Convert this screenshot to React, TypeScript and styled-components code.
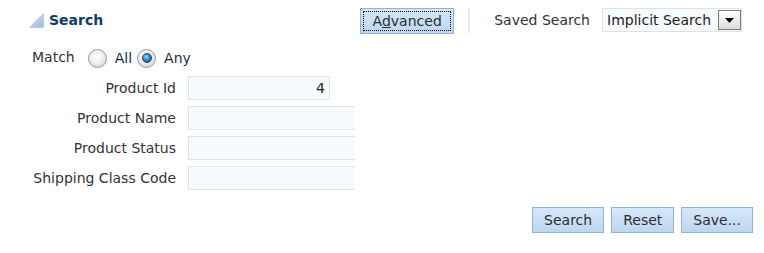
import React from 'react';
import styled, { createGlobalStyle } from 'styled-components';

const GlobalStyle = createGlobalStyle`
  html, body {
    margin: 0;
    padding: 0;
    background: #ffffff;
  }
  body {
    font-family: 'DejaVu Sans', Verdana, sans-serif;
    font-size: 14px;
    color: #333333;
  }
`;

const Panel = styled.div`
  width: 764px;
  height: 253px;
  box-sizing: border-box;
  display: flex;
  flex-direction: column;
  overflow: hidden;
`;

const Header = styled.div`
  height: 40px;
  display: flex;
  align-items: center;
  justify-content: space-between;
  padding: 0 22px 0 29px;
`;

const Title = styled.h2`
  margin: 0;
  display: flex;
  align-items: center;
  gap: 5px;
  font-size: 14px;
  font-weight: bold;
  color: #0b3b66;
`;

const Toolbar = styled.div`
  display: flex;
  align-items: center;
`;

const Button = styled.button<{ $focused?: boolean }>`
  position: relative;
  height: 26px;
  padding: 0 11px;
  border: 1px solid #8fb3d6;
  background: linear-gradient(#d6e8fa, #bcd6f1);
  font-family: 'DejaVu Sans', Verdana, sans-serif;
  font-size: 14px;
  color: #2e2e2e;
  cursor: pointer;

  ${({ $focused }) =>
    $focused &&
    `
    &::after {
      content: '';
      position: absolute;
      inset: 2px;
      border: 1px dotted #000;
    }
  `}
`;

const AdvancedButton = styled(Button)`
  width: 94px;
  margin-top: 1px;
`;

const Separator = styled.span`
  width: 2px;
  height: 25px;
  margin: 0 24px 0 14px;
  background: #e3e9ef;
`;

const SavedLabel = styled.span`
  margin-right: 12px;
  color: #333;
`;

const Select = styled.div`
  width: 140px;
  height: 24px;
  box-sizing: border-box;
  display: flex;
  align-items: center;
  justify-content: space-between;
  padding: 0 0 0 4px;
  border: 1px solid #dbe2e8;
  background: #f8fbfe;
  color: #1c1c1c;
`;

const DropButton = styled.span`
  width: 23px;
  height: 20px;
  box-sizing: border-box;
  display: flex;
  align-items: center;
  justify-content: center;
  border: 1px solid #7d7d7d;
  background: linear-gradient(#ffffff, #dcdcdc);
`;

const MatchRow = styled.div`
  display: flex;
  align-items: center;
  height: 20px;
  margin-top: 8px;
  padding-left: 32px;
`;

const MatchLabel = styled.span`
  margin-right: 13px;
  margin-top: -2px;
`;

const RadioOption = styled.label`
  display: flex;
  align-items: center;
  gap: 8px;
  margin-right: 5px;
  color: #1e2a44;
`;

const RadioDot = styled.span<{ $checked?: boolean }>`
  position: relative;
  width: 19px;
  height: 19px;
  box-sizing: border-box;
  border-radius: 50%;
  border: 1px solid #9a9a9a;
  background: radial-gradient(circle at 45% 40%, #ffffff 0%, #eeeeee 45%, #c8c8c8 100%);

  ${({ $checked }) =>
    $checked &&
    `
    &::after {
      content: '';
      position: absolute;
      left: 3.5px;
      top: 3.5px;
      width: 10px;
      height: 10px;
      box-sizing: border-box;
      border-radius: 50%;
      border: 1px solid #1c3f5e;
      background: radial-gradient(circle at 40% 35%, #9fd8ff 0%, #2b8fd6 45%, #0b4f86 100%);
    }
  `}
`;

const FormGrid = styled.div`
  display: grid;
  grid-template-columns: 144px 167px;
  column-gap: 12px;
  row-gap: 6px;
  margin-top: 8px;
  padding-left: 32px;
`;

const FieldLabel = styled.label`
  display: flex;
  align-items: center;
  justify-content: flex-end;
  height: 24px;
  white-space: nowrap;
`;

const FieldCell = styled.div`
  overflow: hidden;
`;

const Field = styled.div<{ $width: number }>`
  width: ${({ $width }) => $width}px;
  height: 24px;
  box-sizing: border-box;
  display: flex;
  align-items: center;
  justify-content: flex-end;
  padding-right: 4px;
  border: 1px solid #dde3e8;
  background: #f8fbfe;
  color: #222;
`;

const Actions = styled.div`
  display: flex;
  justify-content: flex-end;
  gap: 7px;
  margin-top: 17px;
  padding-right: 11px;
`;

const Disclosure = () => (
  <svg width="15" height="15" viewBox="0 0 15 15">
    <defs>
      <linearGradient id="tri" x1="0" y1="0" x2="1" y2="1">
        <stop offset="0" stopColor="#dbe7f3" />
        <stop offset="1" stopColor="#9ab8d6" />
      </linearGradient>
    </defs>
    <polygon points="14.5,0.5 14.5,14.5 0.5,14.5" fill="url(#tri)" stroke="#b3c9de" strokeWidth="0.8" />
  </svg>
);

const fields = [
  { label: 'Product Id', width: 142, value: '4' },
  { label: 'Product Name', width: 190, value: '' },
  { label: 'Product Status', width: 190, value: '' },
  { label: 'Shipping Class Code', width: 190, value: '' },
];

const App = () => {
  return (
    <>
      <GlobalStyle />
      <Panel>
        <Header>
          <Title>
            <Disclosure />
            Search
          </Title>
          <Toolbar>
            <AdvancedButton $focused>
              A<u>d</u>vanced
            </AdvancedButton>
            <Separator />
            <SavedLabel>Saved Search</SavedLabel>
            <Select>
              Implicit Search
              <DropButton>
                <svg width="9" height="5" viewBox="0 0 9 5">
                  <polygon points="0,0 9,0 4.5,5" fill="#000" />
                </svg>
              </DropButton>
            </Select>
          </Toolbar>
        </Header>

        <MatchRow>
          <MatchLabel>Match</MatchLabel>
          <RadioOption>
            <RadioDot />
            All
          </RadioOption>
          <RadioOption>
            <RadioDot $checked />
            Any
          </RadioOption>
        </MatchRow>

        <FormGrid>
          {fields.map((f) => (
            <React.Fragment key={f.label}>
              <FieldLabel>{f.label}</FieldLabel>
              <FieldCell>
                <Field $width={f.width}>{f.value}</Field>
              </FieldCell>
            </React.Fragment>
          ))}
        </FormGrid>

        <Actions>
          <Button>Search</Button>
          <Button>Reset</Button>
          <Button>Save...</Button>
        </Actions>
      </Panel>
    </>
  );
};

export default App;
